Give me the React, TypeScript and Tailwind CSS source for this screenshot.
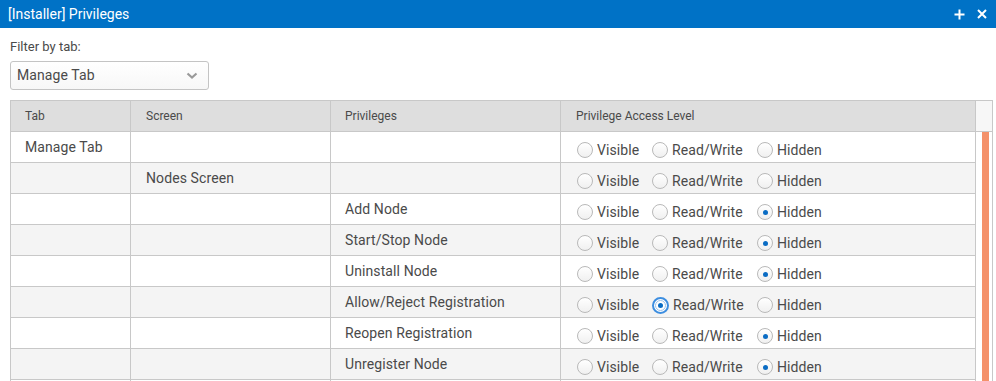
import React from "react";

type Row = { tab: string; screen: string; priv: string; sel: number; focus?: boolean };

const rows: Row[] = [
  { tab: "Manage Tab", screen: "", priv: "", sel: -1 },
  { tab: "", screen: "Nodes Screen", priv: "", sel: -1 },
  { tab: "", screen: "", priv: "Add Node", sel: 2 },
  { tab: "", screen: "", priv: "Start/Stop Node", sel: 2 },
  { tab: "", screen: "", priv: "Uninstall Node", sel: 2 },
  { tab: "", screen: "", priv: "Allow/Reject Registration", sel: 1, focus: true },
  { tab: "", screen: "", priv: "Reopen Registration", sel: 2 },
  { tab: "", screen: "", priv: "Unregister Node", sel: 2 },
  { tab: "", screen: "", priv: "", sel: -2 },
];

function Radio({ checked, focus }: { checked: boolean; focus?: boolean }) {
  if (focus) {
    return (
      <span className="w-[17px] h-[17px] rounded-full border-2 border-[#3d8ee0] bg-white flex items-center justify-center shrink-0">
        <span className="w-[11px] h-[11px] rounded-full border border-[#9cc3ea] flex items-center justify-center">
          <span className="w-[5px] h-[5px] rounded-full bg-[#0a6cc4]" />
        </span>
      </span>
    );
  }
  return (
    <span className="w-[16px] h-[16px] rounded-full border border-[#b9b9b9] bg-gradient-to-b from-white to-[#f0f0f0] flex items-center justify-center shrink-0">
      {checked && <span className="w-[5px] h-[5px] rounded-full bg-[#0a6cc4]" />}
    </span>
  );
}

export default function App() {
  return (
    <div className="w-[996px] h-[381px] overflow-hidden bg-white text-[#4a4a4a]" style={{ fontFamily: "Roboto, 'Liberation Sans', sans-serif" }}>
      <div className="h-[28px] bg-[#0072c6] flex items-center justify-between pl-[8px] pr-[9px] text-white">
        <span className="text-[14px]">[Installer] Privileges</span>
        <div className="flex items-center gap-[12px]">
          <svg width="11" height="11" viewBox="0 0 11 11"><path d="M5.5 0.5v10M0.5 5.5h10" stroke="white" strokeWidth="2" /></svg>
          <svg width="10" height="10" viewBox="0 0 10 10"><path d="M1 1l8 8M9 1l-8 8" stroke="white" strokeWidth="2" /></svg>
        </div>
      </div>
      <div className="pl-[10px] pr-[3px]">
        <div className="text-[13px] pt-[12px] leading-[14px]">Filter by tab:</div>
        <div className="mt-[7px] w-[199px] h-[29px] border border-[#c4c4c4] rounded-[3px] flex items-center justify-between pl-[6px] pr-[10px] bg-gradient-to-b from-white to-[#f7f7f7]">
          <span className="text-[14px] tracking-[0.1px]">Manage Tab</span>
          <svg width="12" height="8" viewBox="0 0 12 8"><path d="M1.5 1.5l4.5 4 4.5-4" stroke="#9a9a9a" strokeWidth="2.2" fill="none" /></svg>
        </div>
        <div className="mt-[10px] border border-[#c8c8c8] border-b-0 flex">
          <div className="w-[966px]">
            <div className="grid grid-cols-[120px_200px_230px_415px] h-[31px] bg-[#dedede] border-b border-[#c8c8c8] text-[12px]">
              <div className="border-r border-[#c8c8c8] pl-[14px] flex items-center">Tab</div>
              <div className="border-r border-[#c8c8c8] pl-[15px] flex items-center">Screen</div>
              <div className="border-r border-[#c8c8c8] pl-[14px] flex items-center">Privileges</div>
              <div className="border-r border-[#c8c8c8] pl-[15px] flex items-center">Privilege Access Level</div>
            </div>
            {rows.map((r, i) => (
              <div
                key={i}
                className={`grid grid-cols-[120px_200px_230px_415px] h-[31px] border-b border-[#c8c8c8] text-[14px] tracking-[0.1px] ${i % 2 === 1 ? "bg-[#f4f4f4]" : "bg-white"}`}
              >
                <div className="border-r border-[#c8c8c8] pl-[14px] pt-[7px] leading-[17px]">{r.tab}</div>
                <div className="border-r border-[#c8c8c8] pl-[15px] pt-[7px] leading-[17px]">{r.screen}</div>
                <div className="border-r border-[#c8c8c8] pl-[14px] pt-[7px] leading-[17px]">{r.priv}</div>
                <div className="border-r border-[#c8c8c8] pl-[16px] flex items-center pt-[6px] text-[14px]">
                  {r.sel !== -2 && (
                    <>
                      <div className="flex items-center gap-[4px] w-[75px]">
                        <Radio checked={r.sel === 0} />
                        <span>Visible</span>
                      </div>
                      <div className="flex items-center gap-[4px] w-[105px]">
                        <Radio checked={r.sel === 1} focus={r.focus} />
                        <span>Read/Write</span>
                      </div>
                      <div className="flex items-center gap-[4px]">
                        <Radio checked={r.sel === 2} />
                        <span>Hidden</span>
                      </div>
                    </>
                  )}
                </div>
              </div>
            ))}
          </div>
          <div className="w-[16px] flex flex-col">
            <div className="h-[31px] bg-[#f7f7f7] border-b border-[#c8c8c8]" />
            <div className="flex-1 flex justify-end pr-[3px]">
              <div className="w-[7px] h-full bg-[#f4916a]" />
            </div>
          </div>
        </div>
      </div>
    </div>
  );
}
